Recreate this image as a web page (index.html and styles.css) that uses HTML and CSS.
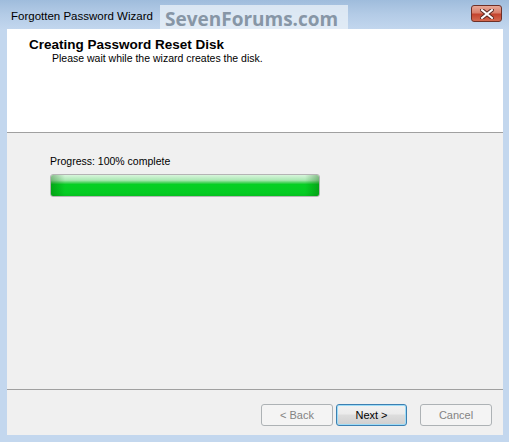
FILE: index.html
```html
<!DOCTYPE html>
<html>
<head>
<meta charset="utf-8">
<link rel="stylesheet" href="styles.css">
</head>
<body>
<div class="window">
  <div class="titlebar">
    <span class="title">Forgotten Password Wizard</span>
    <div class="watermark">SevenForums.com</div>
    <div class="close"><svg width="14" height="10" viewBox="0 0 14 10"><path d="M2 1 L12 9 M12 1 L2 9" stroke="#5a2a24" stroke-width="4" stroke-linecap="square"/><path d="M2 1 L12 9 M12 1 L2 9" stroke="#fff" stroke-width="2" stroke-linecap="square"/></svg></div>
  </div>
  <div class="client">
    <div class="header">
      <div class="h-title">Creating Password Reset Disk</div>
      <div class="h-sub">Please wait while the wizard creates the disk.</div>
    </div>
    <div class="body">
      <div class="label">Progress: 100% complete</div>
      <div class="bar"><div class="fill"></div></div>
    </div>
    <div class="footer">
      <button class="btn disabled">&lt; Back</button>
      <button class="btn default">Next &gt;</button>
      <button class="btn disabled cancel">Cancel</button>
    </div>
  </div>
</div>
</body>
</html>
```

FILE: styles.css
```css
html, body { margin: 0; padding: 0; }
body { width: 509px; height: 442px; overflow: hidden; font-family: "Liberation Sans", Arial, sans-serif; }
.window {
  width: 509px; height: 442px; box-sizing: border-box;
  background: linear-gradient(180deg, #9fbcdc 0px, #b3cbe6 14px, #c3d7ee 30px, #c3d7ee 100%);
  display: flex; flex-direction: column;
  padding: 0 6px 7px 7px;
  position: relative;
}
.titlebar { height: 29px; display: flex; align-items: center; position: relative; }
.title { font-family: "Liberation Sans", Arial, sans-serif; font-size: 11.5px; color: #000; margin-left: 4px; margin-top: 2px; }
.watermark {
  position: absolute; left: 153px; top: 5px; width: 188px; height: 24px;
  background: rgba(235, 241, 248, 0.75);
  font-family: "Open Sans", sans-serif; font-weight: bold; font-size: 19px;
  color: #8796a6; line-height: 28px; padding-left: 5px; box-sizing: border-box; white-space: nowrap;
}
.close {
  margin-left: auto; margin-right: 1px; margin-top: -2px;
  width: 31px; height: 17px; box-sizing: border-box;
  border: 1px solid #6e3027; border-radius: 3px;
  background: linear-gradient(180deg, #e8a898 0%, #d9806c 45%, #c4442e 55%, #d46a50 100%);
  display: flex; align-items: center; justify-content: center;
}
.client { flex: 1; display: flex; flex-direction: column; background: #f0f0f0; }
.header { height: 104px; background: #fff; border-bottom: 1px solid #a0a0a0; padding: 8px 0 0 22px; box-sizing: border-box; }
.h-title { font-weight: bold; font-size: 13.5px; color: #000; }
.h-sub { font-size: 10.5px; margin-left: 23px; margin-top: 0px; color: #000; }
.body { flex: 1; padding: 22px 0 0 43px; border-bottom: 1px solid #a0a0a0; }
.label { font-size: 10.5px; color: #000; }
.bar {
  margin-top: 7px; width: 270px; height: 23px; box-sizing: border-box;
  border: 1px solid #b4b4b4; border-radius: 3px; background: #e6e6e6; overflow: hidden;
}
.fill {
  width: 100%; height: 100%;
  background:
    linear-gradient(90deg, rgba(0,90,0,0.35) 0px, rgba(0,90,0,0) 14px, rgba(0,90,0,0) calc(100% - 14px), rgba(0,90,0,0.35) 100%),
    linear-gradient(180deg, #d8f5dc 0%, #a9e8b2 25%, #3fd152 38%, #06cf24 45%, #05cc22 85%, #06c020 100%);
}
.footer { height: 45px; display: flex; align-items: flex-start; padding-top: 14px; box-sizing: border-box; padding-left: 254px; }
.btn {
  width: 72px; height: 22px; box-sizing: border-box; margin: 0; padding: 0;
  font-family: "Liberation Sans", Arial, sans-serif; font-size: 11px;
  border-radius: 3px;
}
.disabled { border: 1px solid #adb2b5; background: #f4f4f4; color: #838383; }
.default {
  margin-left: 3px; width: 71px;
  border: 1px solid #3c7fb1; color: #000;
  background: linear-gradient(180deg, #f2f2f2 0%, #ebebeb 45%, #dddddd 50%, #cfcfcf 100%);
  box-shadow: inset 0 0 0 1px #9edcf7;
}
.cancel { margin-left: 13px; }
```
